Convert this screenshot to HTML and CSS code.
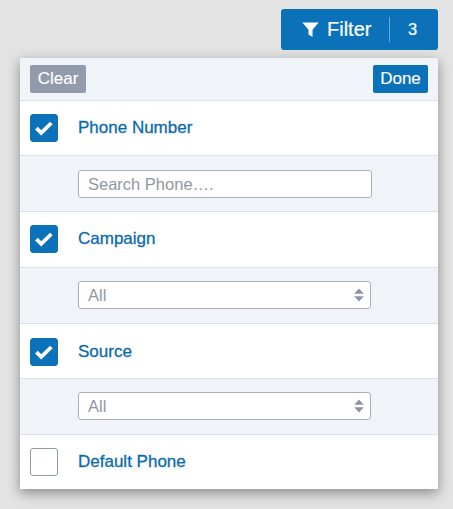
FILE: index.html
```html
<!DOCTYPE html>
<html lang="en">
<head>
<meta charset="utf-8">
<title>Filter</title>
<link rel="stylesheet" href="styles.css">
</head>
<body>
<div class="page">
  <div class="toolbar">
    <button class="filter-btn" type="button">
      <svg class="funnel" viewBox="0 0 16 16" width="17" height="17"><path d="M0.3 1.5h15.4L9.9 8.2V15L6.1 12.7V8.2z" fill="#fff"/></svg>
      <span class="filter-label">Filter</span>
      <span class="filter-sep"></span>
      <span class="filter-count">3</span>
    </button>
  </div>
  <div class="panel">
    <div class="panel-head">
      <button class="btn btn-clear" type="button">Clear</button>
      <button class="btn btn-done" type="button">Done</button>
    </div>
    <div class="row">
      <span class="check on"><svg viewBox="0 0 20 20" width="20" height="20"><path d="M2.4 10.2l4.8 4.6 10.2-9.8" fill="none" stroke="#fff" stroke-width="3.8"/></svg></span>
      <span class="row-label">Phone Number</span>
    </div>
    <div class="sub">
      <div class="field search">Search Phone….</div>
    </div>
    <div class="row tall">
      <span class="check on"><svg viewBox="0 0 20 20" width="20" height="20"><path d="M2.4 10.2l4.8 4.6 10.2-9.8" fill="none" stroke="#fff" stroke-width="3.8"/></svg></span>
      <span class="row-label">Campaign</span>
    </div>
    <div class="sub">
      <div class="field select">All
        <svg class="updown" viewBox="0 0 10 14" width="10" height="14"><path d="M5 0.5L9.8 5.8H0.2zM5 13.5L0.2 8.2H9.8z" fill="#8a94a6"/></svg>
      </div>
    </div>
    <div class="row low">
      <span class="check on"><svg viewBox="0 0 20 20" width="20" height="20"><path d="M2.4 10.2l4.8 4.6 10.2-9.8" fill="none" stroke="#fff" stroke-width="3.8"/></svg></span>
      <span class="row-label">Source</span>
    </div>
    <div class="sub">
      <div class="field select">All
        <svg class="updown" viewBox="0 0 10 14" width="10" height="14"><path d="M5 0.5L9.8 5.8H0.2zM5 13.5L0.2 8.2H9.8z" fill="#8a94a6"/></svg>
      </div>
    </div>
    <div class="row last">
      <span class="check"></span>
      <span class="row-label">Default Phone</span>
    </div>
  </div>
</div>
</body>
</html>
```
FILE: styles.css
```css
* { box-sizing: border-box; }
html, body { margin: 0; height: 100%; }
body {
  background: #e3e3e3;
  font-family: "Liberation Sans", Arial, sans-serif;
  overflow: hidden;
}
.page { padding: 9px 15px 0 20px; }
.toolbar { display: flex; justify-content: flex-end; margin-bottom: 8px; }
.filter-btn {
  display: flex;
  align-items: center;
  width: 157px;
  height: 41px;
  padding: 0 0 0 21px;
  background: #0b72b9;
  border: 0;
  border-radius: 3px;
  color: #fff;
  font: inherit;
  font-size: 20px;
}
.funnel { flex: none; margin-right: 8px; }
.filter-label { width: 49px; text-align: left; -webkit-text-stroke: 0.2px #fff; }
.filter-sep { width: 1px; height: 25px; background: #6aa9d8; margin: 0 18px 0 13px; }
.filter-count { font-size: 16.5px; -webkit-text-stroke: 0.2px #fff; }
.panel {
  width: 418px;
  background: #fff;
  box-shadow: 0 4px 12px rgba(0, 0, 0, 0.4);
}
.panel-head {
  display: flex;
  justify-content: space-between;
  align-items: flex-start;
  height: 43px;
  padding: 7px 10px 0;
  background: #f0f3f8;
  border-bottom: 1px solid #dcdfe4;
}
.btn {
  height: 28px;
  padding: 0;
  border: 0;
  border-radius: 2px;
  color: #fff;
  font: inherit;
  font-size: 17px;
  -webkit-text-stroke: 0.15px #fff;
}
.btn-clear { width: 56px; background: #929aab; }
.btn-done { width: 55px; background: #0b72b9; }
.row {
  display: flex;
  align-items: center;
  height: 55px;
  padding-left: 10px;
  border-bottom: 1px solid #dcdfe4;
  background: #fff;
}
.row.tall { height: 56px; padding-bottom: 1px; }
.row.low { padding-top: 2px; }
.row.last { height: 54px; border-bottom: 0; }
.check {
  display: flex;
  align-items: center;
  justify-content: center;
  width: 28px;
  height: 28px;
  margin-right: 20px;
  border-radius: 3px;
  border: 1.5px solid #929aab;
  background: #fff;
}
.check.on { background: #0b72b9; border-color: #0b72b9; }
.row-label { color: #0a6aab; font-size: 17px; -webkit-text-stroke: 0.3px #0a6aab; }
.sub {
  height: 56px;
  padding: 13px 0 0 58px;
  background: #f0f3f8;
  border-bottom: 1px solid #dcdfe4;
}
.field {
  display: flex;
  align-items: center;
  justify-content: space-between;
  height: 28px;
  background: #fff;
  border: 1px solid #a9b0bd;
  border-radius: 3px;
  color: #8f97a5;
  font-size: 16.5px;
}
.search { width: 294px; padding-left: 9px; margin-top: 1px; }
.select { width: 293px; padding: 0 6px 0 9px; }
.updown { flex: none; }
```
